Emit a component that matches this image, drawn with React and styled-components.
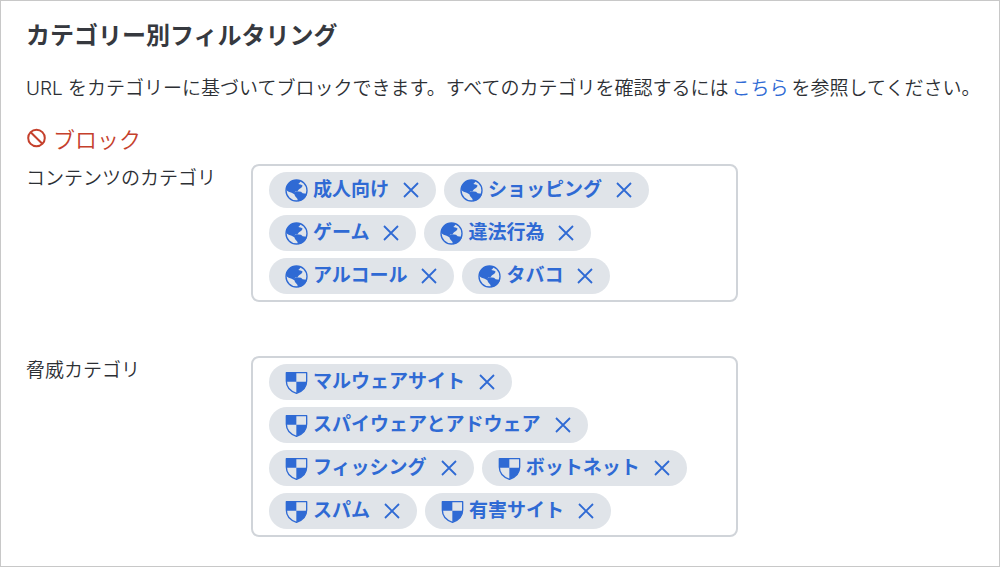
import React, { useState } from 'react';
import styled, { createGlobalStyle } from 'styled-components';

const GlobalStyle = createGlobalStyle`
  *, *::before, *::after {
    box-sizing: border-box;
  }

  body {
    margin: 0;
    background: #fff;
    color: #2c2f34;
    font-family: Inter, "Noto Sans CJK JP", sans-serif;
    font-size: 19px;
    line-height: 28px;
  }
`;

const Page = styled.main`
  min-height: 100vh;
  padding: 17px 8px 28px 25px;
  border: 1px solid #c8c8c8;
`;

const Title = styled.h1`
  margin: 0;
  color: #36393f;
  font-size: 24px;
  font-weight: 700;
  line-height: 36px;
`;

const Description = styled.p`
  margin: 21px 0 23px;
  font-weight: 350;
`;

const Link = styled.a`
  color: #2f6ad4;
  text-decoration: none;
  margin: 0 3px;
`;

const Action = styled.h2`
  display: flex;
  align-items: center;
  gap: 7px;
  margin: 0;
  color: #c5402c;
  font-size: 22px;
  font-weight: 350;
  line-height: 28px;

  svg {
    width: 20px;
    height: 20px;
    margin-bottom: 4px;
  }
`;

const Rows = styled.div`
  display: flex;
  flex-direction: column;
  gap: 54px;
  margin-top: 10px;
`;

const Row = styled.section`
  display: grid;
  grid-template-columns: 225px minmax(0, 487px);
  align-items: start;
`;

const RowLabel = styled.h3`
  margin: 0;
  font-size: 19px;
  font-weight: 350;
  line-height: 30px;
`;

const TagBox = styled.ul`
  display: flex;
  flex-wrap: wrap;
  gap: 7px 8px;
  margin: 0;
  padding: 6px 16px;
  border: 2px solid #d0d4d9;
  border-radius: 8px;
  list-style: none;
`;

const Tag = styled.li`
  display: flex;
  align-items: center;
  height: 36px;
  padding: 0 9px 0 16px;
  border-radius: 18px;
  background: #e0e4e9;
  color: #2f6ad4;
  font-weight: 700;
`;

const TagIcon = styled.svg`
  width: 23px;
  height: 23px;
  margin-right: 5px;
`;

const RemoveButton = styled.button`
  display: flex;
  margin-left: 6px;
  padding: 8px;
  border: 0;
  background: none;
  color: inherit;
  cursor: pointer;
`;

const Globe = () => (
  <TagIcon viewBox="0 0 69 69" aria-hidden="true">
    <circle cx="34.5" cy="34.5" r="31.5" fill="none" stroke="currentColor" strokeWidth="4" />
    <path
      fill="currentColor"
      d="M3 28C7 13 20 3 35 3l13 2-4 6-4 4 9 2 4 3-4 6-7 5-4 5-8 2-1 3 5 2 1 4-7-1-8-5-9-3-7-4z"
    />
    <path
      fill="currentColor"
      d="M27 41l8-4 13 1 5 5 11 1 1 4C60 60 50 66 39 67l-2-8-7-8z"
    />
  </TagIcon>
);

const Shield = () => (
  <TagIcon viewBox="0 0 69 69" aria-hidden="true">
    <path
      fill="none"
      stroke="currentColor"
      strokeWidth="4"
      strokeLinejoin="round"
      d="M4 5h61v25c0 18-13 31-30.500 37C17 61 4 48 4 30z"
    />
    <path fill="currentColor" d="M4 5h30v27H4zM34 32h31c-1 17-13 29-31 35z" />
  </TagIcon>
);

const Cross = () => (
  <svg width="16" height="16" viewBox="0 0 16 16" aria-hidden="true">
    <path d="M1 1l14 14M15 1L1 15" fill="none" stroke="currentColor" strokeWidth="1.800" />
  </svg>
);

const Ban = () => (
  <svg viewBox="0 0 20 20" aria-hidden="true">
    <g fill="none" stroke="currentColor" strokeWidth="2">
      <circle cx="10.500" cy="10" r="8.300" />
      <path d="M4.700 4.200l11.600 11.600" />
    </g>
  </svg>
);

const groups = [
  {
    id: 'content',
    label: 'コンテンツのカテゴリ',
    icon: Globe,
    tags: ['成人向け', 'ショッピング', 'ゲーム', '違法行為', 'アルコール', 'タバコ'],
  },
  {
    id: 'threat',
    label: '脅威カテゴリ',
    icon: Shield,
    tags: [
      'マルウェアサイト',
      'スパイウェアとアドウェア',
      'フィッシング',
      'ボットネット',
      'スパム',
      '有害サイト',
    ],
  },
];

const CategoryRow = ({ id, label, icon: Icon, tags }) => {
  const [selected, setSelected] = useState(tags);

  return (
    <Row aria-labelledby={id}>
      <RowLabel id={id}>{label}</RowLabel>
      <TagBox>
        {selected.map((tag) => (
          <Tag key={tag}>
            <Icon />
            {tag}
            <RemoveButton
              type="button"
              aria-label={`${tag}を削除`}
              onClick={() => setSelected(selected.filter((t) => t !== tag))}
            >
              <Cross />
            </RemoveButton>
          </Tag>
        ))}
      </TagBox>
    </Row>
  );
};

const App = () => (
  <>
    <GlobalStyle />
    <Page lang="ja">
      <Title>カテゴリー別フィルタリング</Title>
      <Description>
        URL をカテゴリーに基づいてブロックできます。すべてのカテゴリを確認するには
        <Link href="#content">こちら</Link>
        を参照してください。
      </Description>
      <Action>
        <Ban />
        ブロック
      </Action>
      <Rows>
        {groups.map((group) => (
          <CategoryRow key={group.id} {...group} />
        ))}
      </Rows>
    </Page>
  </>
);

export default App;
